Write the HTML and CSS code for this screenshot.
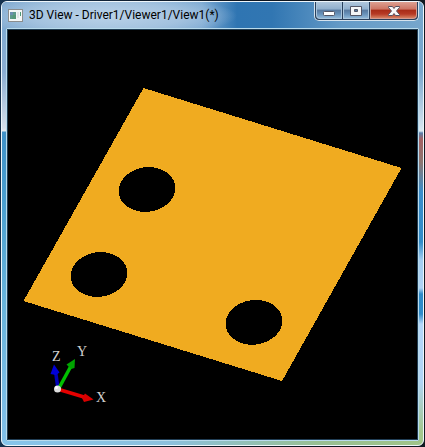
FILE: index.html
```html
<!DOCTYPE html>
<html lang="en">
<head>
<meta charset="utf-8">
<title>3D View</title>
<link rel="stylesheet" href="styles.css">
</head>
<body>
<main class="window">
  <header class="titlebar">
    <svg class="app-icon" viewBox="0 0 15 13" aria-hidden="true">
      <rect width="15" height="13" fill="#8b8d8e"/>
      <rect x="1" y="1" width="13" height="11" fill="#f5f7f7"/>
      <rect x="2" y="3" width="6" height="7" fill="#5f9a8c"/>
      <path d="M2 3h3v3H2z" fill="#6d8fb0"/>
      <path d="M5 6h3v4H4z" fill="#579879"/>
      <rect x="9" y="3" width="2" height="6" fill="#e2e5e7"/>
      <rect x="12" y="3" width="1" height="4" fill="#4e9a78"/>
    </svg>
    <h1 class="title">3D View - Driver1/Viewer1/View1(*)</h1>
    <div class="controls">
      <button class="control minimize" type="button" aria-label="Minimize">
        <svg class="glyph" viewBox="0 0 14 12"><rect x="1.500" y="6.500" width="11" height="4" rx="1" fill="#fff" stroke="#535666"/></svg>
      </button>
      <button class="control maximize" type="button" aria-label="Maximize">
        <svg class="glyph" viewBox="0 0 14 12"><path fill-rule="evenodd" d="M1.500 1.500h11v9h-11zM5.500 4.500h3v2h-3z" fill="#f4f6f8" stroke="#535666"/></svg>
      </button>
      <button class="control close" type="button" aria-label="Close">
        <svg class="glyph" viewBox="0 0 14 12"><path d="M1.500 1.500h4L7 3.500l1.500-2h4v1L9.500 6l3 3.500v1h-4L7 8.500l-1.500 2h-4v-1L4.500 6l-3-3.500z" fill="#f8f8f8" stroke="#56505f"/></svg>
      </button>
    </div>
  </header>
  <section class="viewport">
    <svg class="scene" viewBox="8 30 409 409" preserveAspectRatio="xMidYMid meet" role="img" aria-label="Plate with three holes">
      <g shape-rendering="crispEdges">
        <path d="M143.500 88L401.500 168L282 381L23.500 301z" fill="#f0ab20"/>
        <ellipse cx="147" cy="189.500" rx="28.500" ry="22.300" transform="rotate(-8 147 189.500)"/>
        <ellipse cx="99" cy="274.500" rx="28.500" ry="22.300" transform="rotate(-8 99 274.500)"/>
        <ellipse cx="254" cy="322.300" rx="28.500" ry="22.300" transform="rotate(-8 254 322.300)"/>
      </g>
      <path d="M58 389L55.500 371" stroke="#0000b8" stroke-width="3.500"/>
      <path d="M54 364.500L59.500 372.500L56 375L50.500 374z" fill="#0000d8"/>
      <path d="M59 388L71 366" stroke="#00c000" stroke-width="3.500"/>
      <path d="M75 359L74.500 368L71 369L66.500 364.500z" fill="#00a400"/>
      <path d="M59 389.500L84 397" stroke="#e60000" stroke-width="3.500"/>
      <path d="M93.500 399.500L84 402L82 398L85 393.500z" fill="#d80000"/>
      <circle cx="57.500" cy="389" r="3.500" fill="#ddd"/>
      <circle cx="56.500" cy="387.500" r="1.500" fill="#fff"/>
      <g class="axis-label">
        <text x="52" y="361">Z</text>
        <text x="77" y="356">Y</text>
        <text x="96" y="402">X</text>
      </g>
    </svg>
  </section>
</main>
</body>
</html>
```
FILE: styles.css
```css
* {
  box-sizing: border-box;
}

body {
  margin: 0;
  padding: 1px;
  height: 100vh;
  background: linear-gradient(90deg, #15324f, #0c1420 50%, #101820);
}

.window {
  display: flex;
  flex-direction: column;
  height: 100%;
  padding: 0 4px 4px;
  border: 1px solid #eef6fb;
  border-radius: 6px;
  background:
    linear-gradient(90deg, #86c4ea, #8cc0dc 40%, #98bf92 75%, #a0c488) bottom / 100% 5px no-repeat,
    linear-gradient(#5f92c0, #80abd2 26px, #8aadd2 70px, #d4dfeb 126px, #e4ebf1 129px, #3f91c8 130px, #4a9fd0 200px, #68b4dc 300px, #82c0ea) left / 5px 100% no-repeat,
    linear-gradient(#76a6cc, #78a7cd 70px, #d3e2ee 125px, #dbe8f0 129px, #5a7fab 131px, #a56264 137px, #8d7670 160px, #3a8dca 190px, #318cc8 240px, #a3cdf1 258px, #b0d3f5 286px, #2d8ac8 292px, #2f8cca 312px, #b4d7fa 322px, #b0d4f4 380px, #a4c78c 430px) right / 5px 100% no-repeat,
    #76a6cc;
}

.titlebar {
  display: flex;
  align-items: center;
  flex: none;
  height: 26px;
  margin: 0 -4px;
  padding-left: 6px;
  border-radius: 5px 5px 0 0;
  background:
    radial-gradient(ellipse 130px 22px at 105px 14px, #b9d1e8, #a9c6e1d0 60%, #a9c6e100) no-repeat,
    linear-gradient(90deg, #81aad0, #9dbfdd 100px, #7ca9d2 200px, #2f75b2 235px, #3176b2 270px, #659bc7 340px, #76a6cc);
}

.app-icon {
  flex: none;
  width: 15px;
  height: 13px;
}

.title {
  flex: 1;
  margin: 0 0 0 6px;
  color: #000;
  font: 400 12px/16px Roboto, "Open Sans", sans-serif;
  white-space: nowrap;
}

.controls {
  display: flex;
  align-self: flex-start;
  height: 19px;
  margin-right: 4px;
  border: 1px solid #d5e3ee;
  border-top: 0;
  border-radius: 0 0 5px 5px;
  background: #29405c;
}

.control {
  display: flex;
  align-items: center;
  justify-content: center;
  width: 26px;
  margin: 0 0 1px 1px;
  padding: 2px 0 0;
  border: 1px solid #a9c5dc;
  border-top: 0;
  background: linear-gradient(#b0c7dc, #8fafcd 45%, #56789e 50%, #6791b9 75%, #8db5d6);
}

.minimize {
  border-bottom-left-radius: 4px;
}

.close {
  width: 47px;
  margin-right: 1px;
  border-color: #d59b91;
  border-bottom-right-radius: 4px;
  background: linear-gradient(#dda092, #cd7463 45%, #a82b17 50%, #b73a25 75%, #d58060);
}

.glyph {
  width: 14px;
  height: 12px;
}

.viewport {
  flex: 1;
  min-height: 0;
  border: 1px solid #b9dbec;
  border-radius: 1px;
  background: #000;
}

.scene {
  display: block;
  width: 100%;
  height: 100%;
  border: 1px solid #203d54;
}

.axis-label {
  fill: #d0d0d0;
  font: 14px "Liberation Serif", serif;
}
```
